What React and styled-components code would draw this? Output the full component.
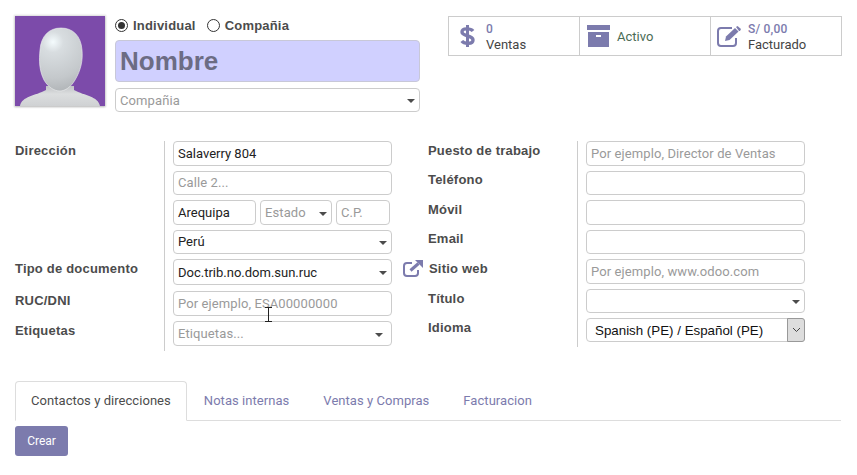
import React from "react";
import styled, { createGlobalStyle } from "styled-components";

const Global = createGlobalStyle`
  html, body { margin: 0; padding: 0; background: #fff; }
  body { font-family: Roboto, "Liberation Sans", Arial, sans-serif; font-size: 13px; color: #4c4c4c; }
`;
const Page = styled.div`
  width: 857px; height: 475px; box-sizing: border-box; padding: 16px 15px 0; overflow: hidden; position: relative;
`;
const Header = styled.div`display: flex; height: 96px;`;
const Avatar = styled.div`
  width: 90px; height: 90px; background: #7c4baa; box-shadow: 0 0 2px 1px rgba(0,0,0,.14), 0 1px 2px rgba(0,0,0,.18); flex: none; overflow: hidden;
  svg { display: block; }
`;
const NameCol = styled.div`width: 305px; margin-left: 10px; flex: none; display: flex; flex-direction: column;`;
const RadioRow = styled.div`display: flex; align-items: center; height: 19px; margin-bottom: 5px; gap: 6px;`;
const Radio = styled.span`
  width: 11px; height: 11px; border: 1px solid #333; border-radius: 50%; display: inline-flex; align-items: center; justify-content: center; background: #fff; flex: none;
  &::after { content: ""; width: 7px; height: 7px; border-radius: 50%; background: ${p => p.$on ? "#333" : "transparent"}; }
`;
const RadioLabel = styled.span`font: 700 13px "Liberation Sans", Arial, sans-serif; letter-spacing: .2px; color: #4c4c4c; margin-right: 5px; margin-left: -1px;`;
const NameBox = styled.div`
  height: 42px; box-sizing: border-box; background: #d0d0ff; border: 1px solid #c8c8d8; border-radius: 4px; font: 700 26px "Liberation Sans", Arial, sans-serif; color: #6c6c84; padding-left: 4px; display: flex; align-items: center;
`;
const Field = styled.div`
  box-sizing: border-box; height: ${p => p.$h || 25}px; width: ${p => p.$w ? p.$w + "px" : "100%"}; margin-top: ${p => p.$mt || 0}px; border: 1px solid #ccc; border-radius: 4px; padding: 0 4px ${p => p.$up ? 2 : 0}px; display: flex; align-items: center; position: relative; flex: none;
  font-size: 13px; letter-spacing: ${p => p.$ph ? ".1px" : "0"}; color: ${p => p.$ph ? "#9a9a9a" : "#222"}; white-space: nowrap; background: #fff;
`;
const NativeSelect = styled(Field)`
  padding-left: 8px; font: 13.33px "Liberation Sans", Arial, sans-serif; color: #111;
`;
const Caret = styled.span`
  position: absolute; right: ${p => p.$r || 4}px; top: 50%; margin-top: -1px; width: 0; height: 0; border-left: 4px solid transparent; border-right: 4px solid transparent; border-top: 4px solid #4c4c4c;
`;
const Stats = styled.div`
  margin-left: 28px; width: 394px; height: 40px; box-sizing: border-box; border: 1px solid #ccc; display: flex; flex: none;
`;
const Stat = styled.div`
  flex: 0 0 ${p => p.$w}px; display: flex; align-items: center; box-sizing: border-box; border-left: ${p => p.$first ? "none" : "1px solid #ccc"}; padding-left: ${p => p.$pad}px; gap: ${p => p.$gap}px;
`;
const StatText = styled.div`display: flex; flex-direction: column; line-height: 15px; font-size: 13px; color: #444;`;
const StatVal = styled.span`font-size: 12px; font-weight: 500; color: #7c7bad; line-height: 16px; letter-spacing: .2px;`;
const ActiveText = styled.span`font-size: 13px; color: #4a6b55;`;
const Form = styled.div`display: flex; align-items: flex-start; margin-top: 29px;`;
const Group = styled.div`display: flex; flex: none; width: ${p => p.$w}px; margin-left: ${p => p.$ml || 0}px;`;
const Labels = styled.div`width: ${p => p.$w}px; flex: none; display: flex; flex-direction: column;`;
const Label = styled.div`
  font: 700 13px "Liberation Sans", Arial, sans-serif; letter-spacing: .2px; color: #4c4c4c; height: ${p => p.$h}px; line-height: 19px; flex: none; position: relative; padding-left: ${p => p.$indent || 0}px;
`;
const Fields = styled.div`
  flex: 1; border-left: 1px solid #ccc; padding: 0 0 5px 8px; display: flex; flex-direction: column; gap: 5px; min-width: 0;
`;
const Row = styled.div`display: flex; gap: 4px;`;
const LinkIcon = styled.svg`position: absolute; left: -25px; top: 1px;`;
const NativeBtn = styled.span`
  position: absolute; right: -1px; top: -1px; bottom: -1px; width: 16px; background: #ddd; border: 1px solid #999; display: flex; align-items: center; justify-content: center; border-radius: 0 3px 3px 0;
`;
const Tabs = styled.div`margin-top: 30px; width: 826px; height: 40px; box-sizing: border-box; border-bottom: 1px solid #ddd; display: flex;`;
const Tab = styled.div`
  box-sizing: border-box; height: 40px; padding: 0 ${p => p.$active ? 15 : 17}px 2px; display: flex; align-items: center; font-size: 13px; letter-spacing: .05px; white-space: nowrap;
  ${p => p.$active ? "color:#4c4c4c;border:1px solid #ddd;border-bottom-color:#fff;border-radius:4px 4px 0 0;background:#fff;" : "color:#7c7bad;"}
`;
const Button = styled.div`
  margin-top: 5px; width: 53px; height: 30px; background: #7c7bad; border-radius: 3px; color: #fff; font-size: 12px; display: flex; align-items: center; justify-content: center;
`;
const Cursor = styled.svg`position: absolute; left: 264px; top: 307px;`;

const AvatarArt = () => (
  <svg width="90" height="90" viewBox="0 0 90 90">
    <defs>
      <radialGradient id="h" gradientUnits="userSpaceOnUse" cx="38" cy="26" r="52">
        <stop offset="0" stopColor="#f4fbfd" /><stop offset="0.2" stopColor="#d8dde0" /><stop offset="0.7" stopColor="#c4c8cb" /><stop offset="1" stopColor="#aeb2b5" />
      </radialGradient>
      <linearGradient id="b" x1="0" y1="0" x2="0" y2="1">
        <stop offset="0" stopColor="#bfc2c4" /><stop offset="0.4" stopColor="#dcdedf" /><stop offset="1" stopColor="#cfd1d3" />
      </linearGradient>
    </defs>
    <path d="M5 90 C7 80 20 80 31 74 L31 70 L59 70 L59 74 C70 80 83 80 85 90 Z" fill="url(#b)" />
    <path d="M46 12 C58 12 66 20 67 34 C68 44 66 54 60 64 C56 71 50 75 45 75 C39 75 33 71 29 64 C24 54 24 44 25 34 C26 20 34 12 46 12 Z" fill="url(#h)" stroke="#eef0f1" strokeWidth=".6" />
  </svg>
);
const Dollar = () => (
  <svg width="15" height="24" viewBox="0 0 15 24" fill="none" stroke="#7c7bad" strokeWidth="3.4">
    <path d="M13 7 C11 4.5 2 3.5 2 8 C2 12.5 13 11 13 16 C13 20.5 4 20 1.8 17" />
    <path d="M7.5 1 V23" strokeWidth="3" />
  </svg>
);
const Box = () => (
  <svg width="24" height="22" viewBox="0 0 24 22" fill="#7c7bad">
    <path d="M0 0 H23 V5 H0 Z" />
    <path d="M1 7 H22 V22 H1 Z M9 10 V12 H14 V10 Z" fillRule="evenodd" />
  </svg>
);
const Edit = () => (
  <svg width="25" height="21" viewBox="0 0 25 21" fill="none" stroke="#7c7bad" strokeWidth="2">
    <path d="M15 2 H4 Q1 2 1 5 V17 Q1 20 4 20 H16 Q19 20 19 17 V12" />
    <path d="M8 15 L9 10.5 L18 2 L21.5 5.5 L12.5 14 Z" fill="#7c7bad" stroke="none" />
    <path d="M19 1 L20.5 0 L24 3 L23 5 L22 5 Z" fill="#7c7bad" stroke="none" />
  </svg>
);

export default function App() {
  return (
    <Page>
      <Global />
      <Header>
        <Avatar><AvatarArt /></Avatar>
        <NameCol>
          <RadioRow>
            <Radio $on /><RadioLabel>Individual</RadioLabel>
            <Radio /><RadioLabel>Compañia</RadioLabel>
          </RadioRow>
          <NameBox>Nombre</NameBox>
          <Field $ph $h={24} $mt={6}>Compañia<Caret /></Field>
        </NameCol>
        <Stats>
          <Stat $first $w={130} $pad={11} $gap={11}>
            <Dollar />
            <StatText><StatVal>0</StatVal><span>Ventas</span></StatText>
          </Stat>
          <Stat $w={131} $pad={7} $gap={6}>
            <Box /><ActiveText>Activo</ActiveText>
          </Stat>
          <Stat $w={131} $pad={6} $gap={6}>
            <Edit />
            <StatText><StatVal>S/ 0,00</StatVal><span>Facturado</span></StatText>
          </Stat>
        </Stats>
      </Header>
      <Form>
        <Group $w={377}>
          <Labels $w={149}>
            <Label $h={118}>Dirección</Label>
            <Label $h={32}>Tipo de documento</Label>
            <Label $h={30}>RUC/DNI</Label>
            <Label $h={30}>Etiquetas</Label>
          </Labels>
          <Fields>
            <Field>Salaverry 804</Field>
            <Field $ph $h={24} $up>Calle 2...</Field>
            <Row>
              <Field $w={83}>Arequipa</Field>
              <Field $ph $w={72}>Estado<Caret /></Field>
              <Field $ph $w={54}>C.P.</Field>
            </Row>
            <Field $h={24} $up>Perú<Caret /></Field>
            <Field $h={26}>Doc.trib.no.dom.sun.ruc<Caret /></Field>
            <Field $ph $mt={1}>Por ejemplo, ESA00000000</Field>
            <Field $ph>Etiquetas...<Caret $r={8} /></Field>
          </Fields>
        </Group>
        <Group $w={377} $ml={36}>
          <Labels $w={149}>
            <Label $h={29}>Puesto de trabajo</Label>
            <Label $h={30}>Teléfono</Label>
            <Label $h={29}>Móvil</Label>
            <Label $h={30}>Email</Label>
            <Label $h={30} $indent={1}>
              <LinkIcon width="20" height="17" viewBox="0 0 20 17" fill="none" stroke="#7c7bad" strokeWidth="2">
                <path d="M9 3 H4 Q1 3 1 6 V13 Q1 16 4 16 H12 Q15 16 15 13 V10" />
                <path d="M7.5 10.5 L15.5 3.5" strokeWidth="3" />
                <path d="M12 0 H20 V8 Z" fill="#7c7bad" stroke="none" />
              </LinkIcon>
              Sitio web
            </Label>
            <Label $h={29}>Título</Label>
            <Label $h={29}>Idioma</Label>
          </Labels>
          <Fields>
            <Field $ph>Por ejemplo, Director de Ventas</Field>
            <Field $h={24} />
            <Field />
            <Field $h={24} />
            <Field $ph>Por ejemplo, www.odoo.com</Field>
            <Field $h={24}><Caret /></Field>
            <NativeSelect $h={24}>
              Spanish (PE) / Español (PE)
              <NativeBtn>
                <svg width="9" height="6" viewBox="0 0 9 6" fill="none" stroke="#444"><path d="M1 1 L4.5 4.5 L8 1" /></svg>
              </NativeBtn>
            </NativeSelect>
          </Fields>
        </Group>
      </Form>
      <Tabs>
        <Tab $active>Contactos y direcciones</Tab>
        <Tab>Notas internas</Tab>
        <Tab>Ventas y Compras</Tab>
        <Tab>Facturacion</Tab>
      </Tabs>
      <Button>Crear</Button>
      <Cursor width="9" height="15" viewBox="0 0 9 15" fill="none" stroke="#222">
        <path d="M1 0.5 H8 M4.5 0.5 V14.5 M1 14.5 H8" />
      </Cursor>
    </Page>
  );
}
